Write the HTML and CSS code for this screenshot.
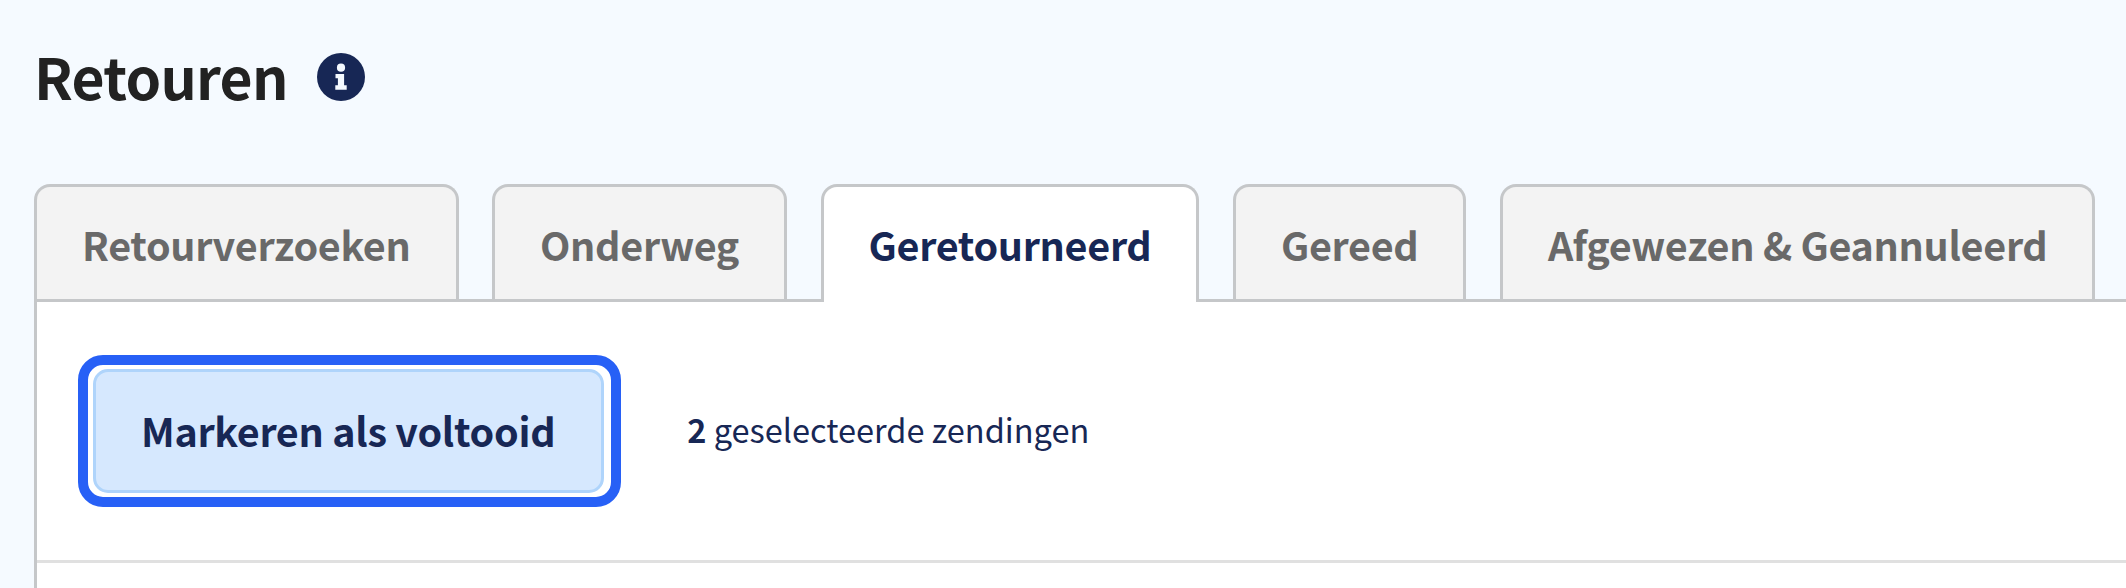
FILE: index.html
```html
<!DOCTYPE html>
<html lang="nl">
<head>
<meta charset="UTF-8" />
<meta name="viewport" content="width=device-width, initial-scale=1" />
<title>Retouren</title>
<link rel="stylesheet" href="styles.css">
</head>
<body>
  <header class="page-header">
    <h1>Retouren</h1>
    <svg class="info-icon" viewBox="0 0 48 48" aria-hidden="true">
      <circle cx="24" cy="24" r="24" />
      <circle class="mark" cx="24" cy="14.7" r="4.1" />
      <path class="mark" d="M18.5 21h8.6v11.3h2.6v4.4H18.3v-4.4h2.6v-7.1h-2.4z" />
    </svg>
  </header>

  <nav class="tabs">
    <a class="tab">Retourverzoeken</a>
    <a class="tab">Onderweg</a>
    <a class="tab active">Geretourneerd</a>
    <a class="tab">Gereed</a>
    <a class="tab">Afgewezen &amp; Geannuleerd</a>
  </nav>

  <main class="panel">
    <div class="toolbar">
      <div class="focus-ring">
        <button type="button" class="btn">Markeren als voltooid</button>
      </div>
      <p class="selected"><b>2</b> geselecteerde zendingen</p>
    </div>
  </main>
</body>
</html>
```

FILE: styles.css
```css
* {
  box-sizing: border-box;
}
body {
  margin: 0;
  height: 588px;
  padding-left: 34px;
  overflow: hidden;
  display: flex;
  flex-direction: column;
  font-family: "Noto Sans CJK SC", "Noto Sans", sans-serif;
  background: #f5faff;
  color: #172755;
}
.page-header {
  display: flex;
  align-items: center;
  gap: 29px;
  height: 154px;
  flex-shrink: 0;
}
h1 {
  margin: 0;
  padding-bottom: 5px;
  font-size: 57px;
  line-height: 80px;
  letter-spacing: -0.7px;
  font-weight: 700;
  color: #222;
}
.info-icon {
  width: 48px;
  height: 48px;
  fill: #172755;
}
.info-icon .mark {
  fill: #f5faff;
}
.tabs {
  display: flex;
  gap: 33.5px;
  margin-top: 30px;
  flex-shrink: 0;
}
.tab {
  height: 115px;
  padding: 0 45px;
  border: 3px solid #c5c7c9;
  border-bottom: none;
  border-radius: 16px 16px 0 0;
  background: #f3f3f3;
  color: #696969;
  font-size: 39.5px;
  line-height: 113px;
  letter-spacing: -0.31px;
  font-weight: 700;
  white-space: nowrap;
}
.tab.active {
  height: 118px;
  margin-bottom: -3px;
  background: #fff;
  color: #172755;
  position: relative;
}
.panel {
  flex: 1;
  border-top: 3px solid #c5c7c9;
  border-left: 3px solid #c5c7c9;
  background: #fff;
}
.toolbar {
  display: flex;
  align-items: center;
  height: 261px;
  padding-left: 41px;
  border-bottom: 3px solid #e0e0e0;
}
.focus-ring {
  padding: 4px 7px 4px 5px;
  border: 10px solid #2760f6;
  border-radius: 25px;
}
.btn {
  display: block;
  height: 124px;
  padding: 0 46px 4px 45px;
  border: 3px solid #afd4fb;
  border-radius: 15px;
  background: #d6e8fe;
  color: #172755;
  font: inherit;
  font-size: 39.5px;
  letter-spacing: -0.3px;
  font-weight: 700;
}
.selected {
  margin: 0 0 0 66px;
  padding-bottom: 5px;
  font-size: 32.5px;
}
```
